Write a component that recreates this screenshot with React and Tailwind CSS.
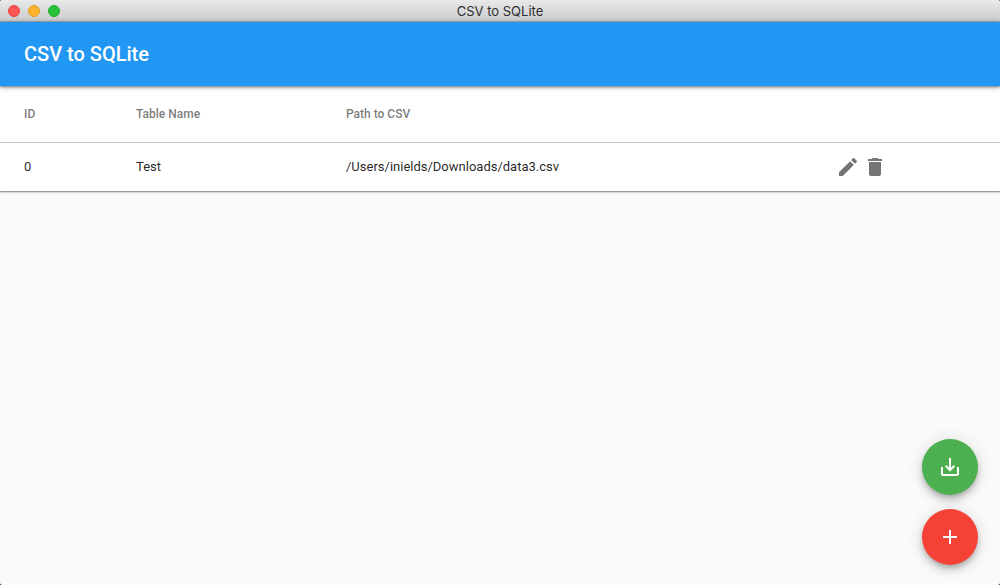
import { useState } from 'react';

function Icon({ path, className }) {
  return (
    <svg className={className} viewBox="0 0 24 24" fill="currentColor" aria-hidden="true">
      <path d={path} />
    </svg>
  );
}

const ICONS = {
  edit: 'M3 17.25V21h3.75L17.81 9.94l-3.75-3.75L3 17.25zM20.71 7.04c.39-.39.39-1.02 0-1.41l-2.34-2.34c-.39-.39-1.02-.39-1.41 0l-1.83 1.83 3.75 3.75 1.83-1.83z',
  remove: 'M6 19c0 1.1.9 2 2 2h8c1.1 0 2-.9 2-2V7H6v12zM19 4h-3.5l-1-1h-5l-1 1H5v2h14V4z',
  add: 'M19 13h-6v6h-2v-6H5v-2h6V5h2v6h6v2z',
  save: 'M19 12v7H5v-7H3v7c0 1.1.9 2 2 2h14c1.1 0 2-.9 2-2v-7h-2zm-6 .67l2.59-2.58L17 11.5l-5 5-5-5 1.41-1.41L11 12.67V3h2z',
};

function TitleBar({ title }) {
  return (
    <div className="relative flex h-[22px] items-center justify-center border-b border-[#afafaf] bg-linear-to-b from-[#e9e9ea] to-[#cbccce]">
      <div className="absolute left-2 flex gap-2">
        <button type="button" aria-label="Close" className="size-3 rounded-full border border-[#e2453f] bg-[#fc5753]" />
        <button type="button" aria-label="Minimize" className="size-3 rounded-full border border-[#dfa023] bg-[#fdb32b]" />
        <button type="button" aria-label="Zoom" className="size-3 rounded-full border border-[#1dad2b] bg-[#27c138]" />
      </div>
      <span className="font-[Inter,sans-serif] text-[13px] leading-4 text-[#2f2f2f]">{title}</span>
    </div>
  );
}

function CsvTable({ rows, onDelete }) {
  return (
    <table className="w-full table-fixed bg-white text-left text-[13px] text-black/87 shadow-[0_1px_3px_rgba(0,0,0,0.2),0_1px_1px_rgba(0,0,0,0.3)]">
      <thead>
        <tr className="h-14 border-b border-[#c4c4c4] text-xs text-black/54">
          <th className="w-[11.2%] px-6 font-medium">ID</th>
          <th className="w-[21%] px-6 font-medium">Table Name</th>
          <th className="w-[49%] px-6 font-medium">Path to CSV</th>
          <th aria-label="Actions" />
        </tr>
      </thead>
      <tbody>
        {rows.map((row) => (
          <tr key={row.id} className="h-[49px]">
            <td className="px-6">{row.id}</td>
            <td className="px-6">{row.name}</td>
            <td className="truncate px-6">{row.path}</td>
            <td className="px-6">
              <div className="flex gap-[3px] text-[#757575]">
                <button type="button" aria-label="Edit">
                  <Icon path={ICONS.edit} className="size-6" />
                </button>
                <button type="button" aria-label="Delete" onClick={() => onDelete(row.id)}>
                  <Icon path={ICONS.remove} className="size-6" />
                </button>
              </div>
            </td>
          </tr>
        ))}
      </tbody>
    </table>
  );
}

export default function App() {
  const [rows, setRows] = useState([
    { id: 0, name: 'Test', path: '/Users/inields/Downloads/data3.csv' },
  ]);

  const handleDelete = (id) => setRows(rows.filter((r) => r.id !== id));

  return (
    <div className="min-h-screen bg-black font-[Roboto,sans-serif]">
      <div className="min-h-screen overflow-hidden rounded-xs bg-[#fafafa]">
        <TitleBar title="CSV to SQLite" />

        {/* App bar */}
        <header className="relative flex h-16 items-center bg-[#2196f3] px-6 shadow-[0_1px_5px_rgba(0,0,0,0.4),0_1px_2px_rgba(0,0,0,0.3)]">
          <h1 className="text-xl font-medium text-white">CSV to SQLite</h1>
        </header>

        <CsvTable rows={rows} onDelete={handleDelete} />

        {/* Floating actions */}
        <div className="fixed right-[22px] bottom-5 flex flex-col gap-3.5 text-white">
          <button
            type="button"
            aria-label="Export"
            className="flex size-14 items-center justify-center rounded-full bg-[#4caf50] shadow-[0_3px_5px_-1px_rgba(0,0,0,0.2),0_6px_10px_rgba(0,0,0,0.14),0_1px_18px_rgba(0,0,0,0.12)]"
          >
            <Icon path={ICONS.save} className="size-6" />
          </button>
          <button
            type="button"
            aria-label="Add"
            className="flex size-14 items-center justify-center rounded-full bg-[#f44336] shadow-[0_3px_5px_-1px_rgba(0,0,0,0.2),0_6px_10px_rgba(0,0,0,0.14),0_1px_18px_rgba(0,0,0,0.12)]"
          >
            <Icon path={ICONS.add} className="size-6" />
          </button>
        </div>
      </div>
    </div>
  );
}
